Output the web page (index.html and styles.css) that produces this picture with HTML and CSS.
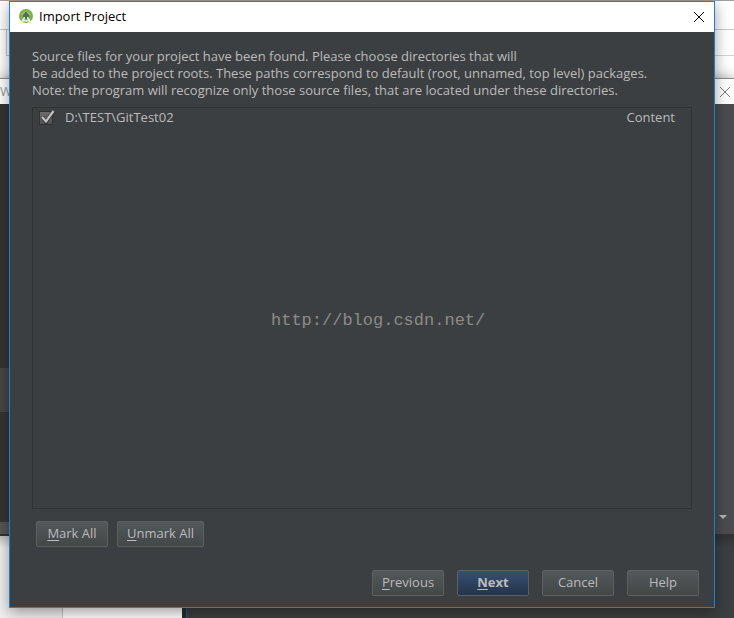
FILE: index.html
```html
<!DOCTYPE html>
<html lang="en">
<head>
<meta charset="utf-8">
<title>Import Project</title>
<link rel="stylesheet" href="styles.css">
</head>
<body>
<div class="desktop" aria-hidden="true">
  <div class="toolbar-edge"></div>
  <div class="back-window">
    <div class="back-title"><span>W</span>
      <svg width="12" height="12" viewBox="0 0 12 12"><path d="M1 1l10 10M11 1L1 11" stroke="#777" fill="none"/></svg>
    </div>
    <div class="back-body">
      <div class="back-row"></div>
      <svg class="back-arrow" width="8" height="5" viewBox="0 0 8 5"><path d="M0 0h8L4 4z" fill="#b4b4b4"/></svg>
    </div>
    <div class="back-status"></div>
  </div>
  <div class="page-strip"></div>
  <div class="dark-window"></div>
</div>
<main class="dialog">
  <header class="titlebar">
    <svg width="16" height="16" viewBox="0 0 16 16" aria-hidden="true">
      <circle cx="8" cy="7" r="7" fill="#78b343"/>
      <path d="M3 6a5 4 0 0 1 10 0z" fill="#8fc25c"/>
      <path d="M8 6L3 15M8 6L13 15M4 10.500q4 3 8 0" stroke="#e6ece2" stroke-width="1.700" fill="none"/>
      <path d="M7 3h2v1l2 2v2H9v2H7V8H5V6l2-2z" fill="#5d665f"/>
    </svg>
    <h1>Import Project</h1>
    <button class="close" type="button" aria-label="Close">
      <svg width="12" height="12" viewBox="0 0 12 12"><path d="M1 1l10 10M11 1L1 11" stroke="#000" fill="none"/></svg>
    </button>
  </header>
  <section class="content">
    <p class="message">Source files for your project have been found. Please choose directories that will<br>be added to the project roots. These paths correspond to default (root, unnamed, top level) packages.<br>Note: the program will recognize only those source files, that are located under these directories.</p>
    <div class="list">
      <div class="row">
        <span class="check">
          <input type="checkbox" id="root" checked>
          <svg width="16" height="16" viewBox="0 0 16 16" aria-hidden="true"><path d="M3 7l4 5L14.500 1" stroke="#2c2c2c" stroke-width="3.500" fill="none"/><path d="M3 7l4 4.500L14.500 1" stroke="#c4c4c4" stroke-width="2.200" fill="none"/></svg>
        </span>
        <label for="root">D:\TEST\GitTest02</label>
        <span>Content</span>
      </div>
      <div class="watermark">http://blog.csdn.net/</div>
    </div>
    <div class="marks">
      <button type="button"><u>M</u>ark All</button>
      <button type="button" class="wide"><u>U</u>nmark All</button>
    </div>
  </section>
  <footer class="actions">
    <button type="button"><u>P</u>revious</button>
    <button type="button" class="primary"><u>N</u>ext</button>
    <button type="button">Cancel</button>
    <button type="button">Help</button>
  </footer>
</main>
</body>
</html>
```
FILE: styles.css
```css
* { box-sizing: border-box; }
body {
  margin: 0;
  min-height: 100vh;
  display: flex;
  position: relative;
  overflow: hidden;
  background: #fff;
  color: #bbb;
  font: 13px/17px "Open Sans", "Noto Sans", sans-serif;
}
.desktop {
  position: absolute;
  inset: 0;
  border-top: 1px solid #a0a0a0;
  background: linear-gradient(#c9c9c9, #c9c9c9) 0 28px / 100% 1px no-repeat,
    linear-gradient(#d4d4d4, #d4d4d4) 100% 54px / 50% 1px no-repeat, #fff;
}
.toolbar-edge {
  position: absolute;
  inset: 29px auto auto 6px;
  width: 20px;
  height: 26px;
  border: 1px solid #c9c9c9;
  border-top: 0;
}
.back-window {
  position: absolute;
  inset: 77px 0 82px;
  display: flex;
  flex-direction: column;
  border-top: 1px solid #8c8c8c;
  box-shadow: 0 0 12px rgba(0, 0, 0, .4);
}
.back-title {
  height: 25px;
  display: flex;
  align-items: center;
  justify-content: space-between;
  padding-right: 3px;
  background: #fff;
  color: #999;
}
.back-body {
  flex: 1;
  position: relative;
  background: linear-gradient(90deg, #353535 50%, #4b4c4f 50%);
}
.back-row {
  position: absolute;
  inset: 264px 50% 110px 0;
  background: #474747;
}
.back-arrow { position: absolute; right: 7px; bottom: 2px; }
.back-status {
  height: 14px;
  border-bottom: 2px solid #333;
  background: linear-gradient(90deg, #555 50%, #4b4c4f 50%);
}
.page-strip {
  position: absolute;
  inset: auto auto 0 0;
  width: 182px;
  height: 82px;
  background: linear-gradient(rgba(0, 0, 0, .2), rgba(0, 0, 0, 0) 12px),
    linear-gradient(90deg, #f0f0f0 62px, #c8c8c8 62px, #c8c8c8 63px, #fff 63px);
}
.dark-window {
  position: absolute;
  inset: auto 0 0 182px;
  height: 82px;
  background: linear-gradient(rgba(0, 0, 0, .2), rgba(0, 0, 0, 0) 12px),
    linear-gradient(90deg, #2b2b2b 4px, #1a5f9c 4px, #1a5f9c 5px, #3c3f41 5px);
}
.dialog {
  position: relative;
  flex: 1;
  min-width: 0;
  display: flex;
  flex-direction: column;
  margin: 1px 19px 10px 9px;
  border: 1px solid #1883d7;
  background: #3c3f41;
  box-shadow: 0 4px 14px rgba(0, 0, 0, .4);
}
.titlebar {
  display: flex;
  align-items: center;
  gap: 5px;
  height: 30px;
  padding: 0 9px 1px 8px;
  background: #fff;
  color: #000;
}
h1 { flex: 1; margin: 0; font: inherit; }
.close { display: flex; padding: 0; border: 0; background: none; }
.content {
  flex: 1;
  display: flex;
  flex-direction: column;
  padding: 16px 22px 0;
}
.message { margin: 0 0 8px; white-space: nowrap; }
.list {
  flex: 1;
  position: relative;
  border: 1px solid #323232;
}
.row {
  display: flex;
  align-items: center;
  height: 19px;
  padding: 0 16px 0 6px;
}
.row label { flex: 1; margin-left: 10px; }
.check { position: relative; width: 16px; height: 16px; }
.check input {
  appearance: none;
  display: block;
  width: 14px;
  height: 14px;
  margin: 1px 0;
  border: 1px solid #2f3030;
  background: linear-gradient(#6b6b6b, #505354);
}
.check svg { position: absolute; inset: 0; pointer-events: none; }
.watermark {
  position: absolute;
  inset: 0 0 0 238px;
  display: flex;
  align-items: center;
  padding-top: 24px;
  color: #8b8b88;
  font: 17px "Liberation Mono", monospace;
  pointer-events: none;
}
.marks { display: flex; gap: 9px; padding: 12px 4px 0; }
.actions {
  display: flex;
  justify-content: flex-end;
  gap: 13px;
  padding: 23px 15px 11px;
}
.marks button, .actions button {
  width: 72px;
  height: 26px;
  padding: 0 0 1px;
  border: 1px solid #5e6060;
  border-radius: 2px;
  background: linear-gradient(#53585a, #424748);
  color: #bbb;
  font: inherit;
}
.marks .wide { width: 87px; }
.actions .primary {
  background: linear-gradient(#365073, #253448);
  font-weight: bold;
}
u { text-underline-offset: 2px; }
```
